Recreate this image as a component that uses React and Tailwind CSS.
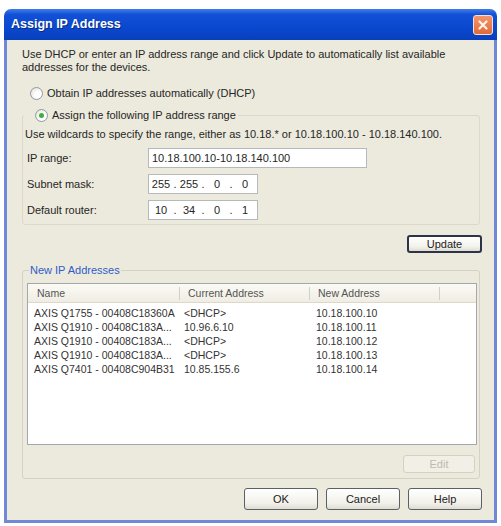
import React from 'react';

const devices = [
  ['AXIS Q1755 - 00408C18360A', '<DHCP>', '10.18.100.10'],
  ['AXIS Q1910 - 00408C183A...', '10.96.6.10', '10.18.100.11'],
  ['AXIS Q1910 - 00408C183A...', '<DHCP>', '10.18.100.12'],
  ['AXIS Q1910 - 00408C183A...', '<DHCP>', '10.18.100.13'],
  ['AXIS Q7401 - 00408C904B31', '10.85.155.6', '10.18.100.14'],
];

const Radio = ({ checked, children }) => (
  <label className="flex items-center gap-[4px] h-[16px] pl-[8px]">
    <span className="w-[13px] h-[13px] rounded-full border border-[#8f9aa6] bg-[radial-gradient(circle_at_65%_65%,#ffffff_30%,#dddbd0)] flex items-center justify-center">
      {checked && <span className="w-[5px] h-[5px] rounded-full bg-[#3fae3f]" />}
    </span>
    <span>{children}</span>
  </label>
);

// four octet fields separated by dots, like the win32 IP address control
const IpField = ({ parts }) => (
  <div className="w-[110px] h-[20px] bg-white border border-[#b5b8bd] flex items-center">
    {parts.map((p, i) => (
      <React.Fragment key={i}>
        <span className="w-[24px] text-center">{p}</span>
        {i < 3 && <span className="w-[4px] text-center">.</span>}
      </React.Fragment>
    ))}
  </div>
);

const Button = ({ children, width = 'w-[74px]', height = 'h-[22px]', variant = 'normal' }) => {
  const look =
    variant === 'default'
      ? 'border-2 border-[#2d3447] text-[#222]'
      : variant === 'disabled'
      ? 'border border-[#d3d1c4] text-[#bdbab0] bg-none bg-[#f1efe6]'
      : 'border border-[#5b5f68] text-[#222]';
  return (
    <button
      className={`${width} ${height} ${look} rounded-[3px] bg-[linear-gradient(180deg,#ffffff,#f2f1ea_70%,#dedcd2)] flex items-center justify-center`}
    >
      {children}
    </button>
  );
};

const CloseButton = () => (
  <div className="w-[20px] h-[20px] rounded-[3px] border border-[#f6e0d4] bg-[linear-gradient(180deg,#f3956b,#e06a3a)] flex items-center justify-center">
    <svg width="12" height="12" viewBox="0 0 12 12">
      <path d="M2.5 2.5 L9.5 9.5 M9.5 2.5 L2.5 9.5" stroke="#fff3ea" strokeWidth="2.2" strokeLinecap="round" />
    </svg>
  </div>
);

export default function App() {
  return (
    <div className="min-h-screen bg-white pt-[9px] pl-[4px] font-['Liberation_Sans',Arial,sans-serif] text-[11px] text-[#262626]">
      <div className="w-[493px] flex flex-col">
        {/* title bar */}
        <div className="h-[31px] rounded-t-[7px] bg-[linear-gradient(180deg,#3f7ded_0%,#1250d6_18%,#0a48d0_60%,#0840bb_100%)] flex items-center justify-between pl-[7px] pr-[4px]">
          <span className="text-white font-bold text-[12.5px] [text-shadow:1px_1px_0_#0a2a80]">Assign IP Address</span>
          <CloseButton />
        </div>

        <div className="bg-[#eceadc] border-x-[3px] border-b-[3px] border-[#7088d6] pl-[15px] pr-[12px] pt-[8px] pb-[10px] flex flex-col leading-[13px]">
          <p className="pr-[14px]">
            Use DHCP or enter an IP address range and click Update to automatically list available addresses for the devices.
          </p>

          <div className="mt-[11px]">
            <Radio>Obtain IP addresses automatically (DHCP)</Radio>
          </div>

          <fieldset className="mt-[6px] mr-[2px] border border-[#dcd9cb] rounded-[3px] px-[4px] pb-[4px]">
            <legend className="pl-[3px] pr-[2px] -ml-[3px]">
              <Radio checked>Assign the following IP address range</Radio>
            </legend>
            <p className="mt-[5px] -ml-[2px]">
              Use wildcards to specify the range, either as 10.18.* or 10.18.100.10 - 10.18.140.100.
            </p>
            <div className="mt-[7px] flex flex-col gap-[6px]">
              <div className="flex items-center">
                <span className="w-[121px]">IP range:</span>
                <div className="w-[219px] h-[20px] bg-white border border-[#b5b8bd] flex items-center pl-[3px]">
                  10.18.100.10-10.18.140.100
                </div>
              </div>
              <div className="flex items-center">
                <span className="w-[121px]">Subnet mask:</span>
                <IpField parts={['255', '255', '0', '0']} />
              </div>
              <div className="flex items-center">
                <span className="w-[121px]">Default router:</span>
                <IpField parts={['10', '34', '0', '1']} />
              </div>
            </div>
          </fieldset>

          <div className="mt-[10px] self-end">
            <Button width="w-[75px]" height="h-[18px]" variant="default">Update</Button>
          </div>

          <fieldset className="mt-[10px] mr-[2px] border border-[#d5d2c3] rounded-[3px] pl-[4px] pr-[2px] pb-[5px]">
            <legend className="ml-[2px] px-[1px] text-[#2f5cc9] leading-[14px]">New IP Addresses</legend>
            <div className="mt-[6px] h-[162px] bg-white border border-[#a4a8ae] text-[10.5px]">
              <div className="h-[19px] flex items-center bg-[linear-gradient(180deg,#fbfaf5,#efede3)] border-b border-[#dcd9cb] text-[#555]">
                <div className="w-[152px] flex items-center pl-[9px]">
                  <span>Name</span>
                  <span className="ml-auto w-px h-[13px] bg-[#d3d0c2]" />
                </div>
                <div className="w-[130px] flex items-center pl-[8px]">
                  <span>Current Address</span>
                  <span className="ml-auto w-px h-[13px] bg-[#d3d0c2]" />
                </div>
                <div className="w-[130px] flex items-center pl-[8px]">
                  <span>New Address</span>
                  <span className="ml-auto w-px h-[13px] bg-[#d3d0c2]" />
                </div>
              </div>
              <div className="pt-[3px] leading-[14px] text-[#333]">
                {devices.map(([name, current, next], i) => (
                  <div key={i} className="flex">
                    <span className="w-[152px] pl-[6px] whitespace-nowrap overflow-hidden">{name}</span>
                    <span className="w-[130px] pl-[4px]">{current}</span>
                    <span className="w-[130px] pl-[6px]">{next}</span>
                  </div>
                ))}
              </div>
            </div>
            <div className="mt-[10px] mr-[2px] flex justify-end">
              <Button width="w-[72px]" height="h-[18px]" variant="disabled">Edit</Button>
            </div>
          </fieldset>

          <div className="mt-[9px] flex justify-end gap-[8px]">
            <Button>OK</Button>
            <Button>Cancel</Button>
            <Button>Help</Button>
          </div>
        </div>
      </div>
    </div>
  );
}
